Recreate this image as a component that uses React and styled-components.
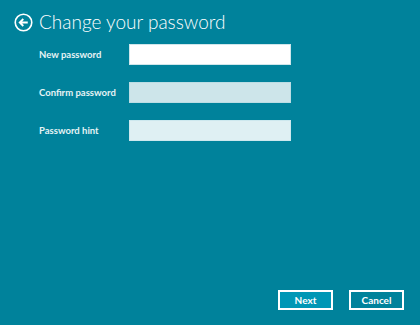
import React from 'react'
import styled, { createGlobalStyle } from 'styled-components'

const Global = createGlobalStyle`
  html, body {
    margin: 0;
    padding: 0;
    background: #00829b;
  }
  body {
    font-family: Lato, "Noto Sans", "Liberation Sans", sans-serif;
    color: #fff;
  }
`

const Page = styled.div`
  display: flex;
  flex-direction: column;
  width: 420px;
  height: 325px;
  box-sizing: border-box;
  padding: 11px 16px 15px 14px;
  background: #00829b;
`

const Header = styled.div`
  display: flex;
  align-items: center;
  gap: 6px;
  height: 22px;
`

const BackButton = styled.button`
  display: flex;
  padding: 0;
  border: none;
  background: transparent;
  color: #fff;
  cursor: pointer;
`

const Title = styled.h1`
  margin: 0;
  font-size: 19px;
  font-weight: 300;
  line-height: 22px;
`

const Form = styled.div`
  display: grid;
  grid-template-columns: 90px 162px;
  row-gap: 17px;
  align-items: center;
  margin-top: 11px;
  padding-left: 25px;
`

const Label = styled.label`
  font-size: 9.5px;
  font-weight: 700;
  color: #e6f3f5;
`

const Field = styled.input`
  box-sizing: border-box;
  width: 162px;
  height: 21px;
  border: 1px solid ${p => p.$border};
  background: ${p => p.$bg};
  outline: none;
  padding: 0 4px;
  font: inherit;
  font-size: 11px;
`

const Footer = styled.div`
  display: flex;
  justify-content: flex-end;
  gap: 16px;
  margin-top: auto;
`

const Button = styled.button`
  box-sizing: border-box;
  width: 55px;
  height: 20px;
  border: 2px solid #fff;
  background: ${p => (p.$primary ? '#0097b5' : 'transparent')};
  color: #fff;
  font-family: inherit;
  font-size: 10px;
  font-weight: 700;
  padding: 0;
  cursor: pointer;
`

const BackIcon = () => (
  <svg width="19" height="19" viewBox="0 0 20 20" fill="none" stroke="#fff">
    <circle cx="10" cy="10" r="8.7" strokeWidth="1.7" />
    <path d="M14.5 10H6.3M9.8 6.3L6 10l3.8 3.7" strokeWidth="1.9" />
  </svg>
)

export default function App() {
  return (
    <Page>
      <Global />
      <Header>
        <BackButton aria-label="Back">
          <BackIcon />
        </BackButton>
        <Title>Change your password</Title>
      </Header>
      <Form>
        <Label>New password</Label>
        <Field type="password" $bg="#ffffff" $border="#cfe6eb" />
        <Label>Confirm password</Label>
        <Field type="password" $bg="#cde5ea" $border="#bcdde4" />
        <Label>Password hint</Label>
        <Field type="text" $bg="#dff0f3" $border="#cde8ee" />
      </Form>
      <Footer>
        <Button $primary>Next</Button>
        <Button>Cancel</Button>
      </Footer>
    </Page>
  )
}
